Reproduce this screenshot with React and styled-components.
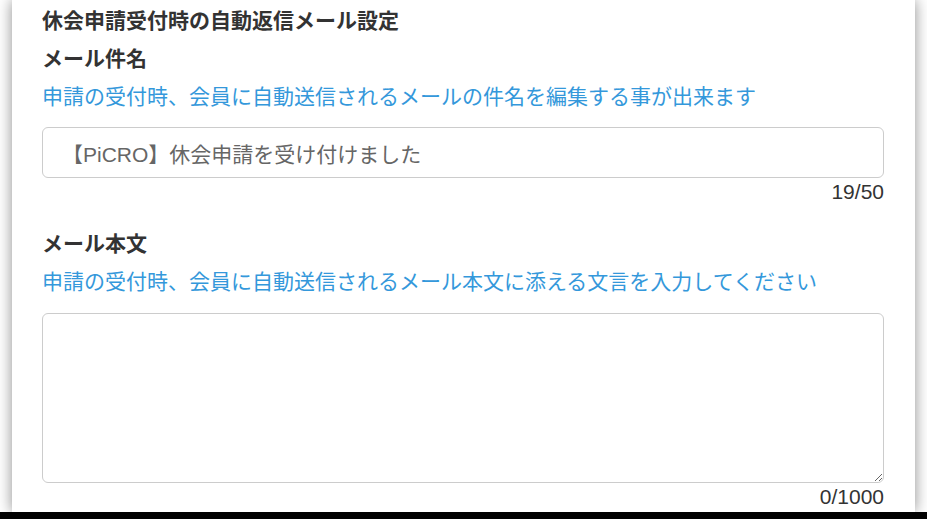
import React, { useState } from "react";
import styled, { createGlobalStyle } from "styled-components";

const GlobalStyle = createGlobalStyle`
  html, body {
    margin: 0;
    padding: 0;
    background: #ffffff;
  }
  body {
    font-family: "Liberation Sans", "Noto Sans CJK JP", sans-serif;
    color: #333333;
  }
`;

const Screen = styled.div`
  display: flex;
  flex-direction: column;
  width: 927px;
  height: 519px;
  overflow: hidden;
`;

const Stage = styled.div`
  flex: 1;
  display: flex;
  padding: 0 12px;
  min-height: 0;
`;

const Panel = styled.section`
  flex: 1;
  background: #ffffff;
  box-shadow: 0 0 14px rgba(0, 0, 0, 0.45);
  padding: 2px 31px 0 30px;
  display: flex;
  flex-direction: column;
`;

const BottomBar = styled.div`
  height: 7px;
  background: #000000;
`;

const Heading = styled.h2`
  margin: 0;
  font-size: 21px;
  line-height: 38px;
  font-weight: bold;
  color: #333333;
`;

const Label = styled.h3`
  margin: ${(p) => (p.$spaced ? "19px 0 0" : "0")};
  font-size: 21px;
  line-height: 38px;
  font-weight: bold;
  color: #333333;
`;

const Hint = styled.p`
  margin: 0;
  font-size: 21px;
  line-height: 38px;
  color: #3498db;
`;

const TextInput = styled.input`
  box-sizing: border-box;
  margin-top: 11px;
  width: 100%;
  height: 51px;
  padding: 0 19px;
  border: 1px solid #cccccc;
  border-radius: 6px;
  font-family: inherit;
  font-size: 21px;
  color: #666666;
  outline: none;
`;

const TextArea = styled.textarea`
  box-sizing: border-box;
  display: block;
  margin-top: 12px;
  width: 100%;
  height: 170px;
  padding: 12px 19px;
  border: 1px solid #cccccc;
  border-radius: 6px;
  font-family: inherit;
  font-size: 21px;
  color: #666666;
  outline: none;
  resize: vertical;
`;

const Counter = styled.div`
  text-align: right;
  font-size: 21px;
  line-height: 28px;
  color: #333333;
`;

export default function App() {
  const [subject, setSubject] = useState("【PiCRO】休会申請を受け付けました");
  const [body, setBody] = useState("");

  return (
    <>
      <GlobalStyle />
      <Screen>
        <Stage>
          <Panel>
            <Heading>休会申請受付時の自動返信メール設定</Heading>
            <Label>メール件名</Label>
            <Hint>申請の受付時、会員に自動送信されるメールの件名を編集する事が出来ます</Hint>
            <TextInput
              value={subject}
              maxLength={50}
              onChange={(e) => setSubject(e.target.value)}
            />
            <Counter>{subject.length}/50</Counter>
            <Label $spaced>メール本文</Label>
            <Hint>申請の受付時、会員に自動送信されるメール本文に添える文言を入力してください</Hint>
            <TextArea
              value={body}
              maxLength={1000}
              onChange={(e) => setBody(e.target.value)}
            />
            <Counter>{body.length}/1000</Counter>
          </Panel>
        </Stage>
        <BottomBar />
      </Screen>
    </>
  );
}
